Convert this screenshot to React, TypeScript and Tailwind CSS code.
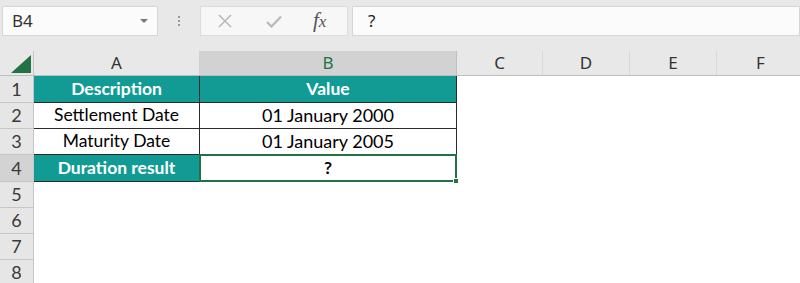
import React from "react";

const TEAL = "bg-[#129b95]";

function RowHead({ n, sel, h }: { n: number; sel?: boolean; h: string }) {
  return (
    <div
      className={`w-[34px] ${h} shrink-0 flex items-center justify-center border-b border-r border-[#c6c6c6] text-[18px] ${
        sel ? "bg-[#d3d3d3] text-[#3a3a3a]" : "bg-[#e6e6e6] text-[#3a3a3a]"
      }`}
    >
      {n}
    </div>
  );
}

export default function App() {
  const font = { fontFamily: "Lato, 'Noto Sans', sans-serif" };
  const hfont = { fontFamily: "'Noto Sans', 'Open Sans', sans-serif" };
  return (
    <div className="w-[800px] h-[283px] overflow-hidden bg-white relative" style={hfont}>
      {/* formula bar */}
      <div className="h-[51px] bg-[#e8e8e8] flex items-start pt-[6px]">
        <div className="ml-[2px] w-[156px] h-[30px] bg-[#fbfbfb] border border-[#d6d6d6] flex items-center justify-between pl-[9px] pr-[9px]">
          <span className="text-[17px] text-[#333]">B4</span>
          <svg width="8" height="5" viewBox="0 0 8 5">
            <path d="M0 0 L8 0 L4 4 Z" fill="#777" />
          </svg>
        </div>
        <div className="w-[42px] h-[30px] flex items-center justify-center">
          <div className="flex flex-col gap-[2px]">
            <div className="w-[2px] h-[2px] bg-[#9a9a9a]" />
            <div className="w-[2px] h-[2px] bg-[#9a9a9a]" />
            <div className="w-[2px] h-[2px] bg-[#9a9a9a]" />
          </div>
        </div>
        <div className="w-[148px] h-[30px] bg-[#f7f7f7] border border-[#dcdcdc] flex items-center">
          <svg className="ml-[17px]" width="14" height="14" viewBox="0 0 14 14">
            <path d="M1 1 L13 13 M13 1 L1 13" stroke="#b9b9b9" strokeWidth="1.6" />
          </svg>
          <svg className="ml-[34px]" width="16" height="13" viewBox="0 0 16 13">
            <path d="M1 7 L5.5 11.5 L15 1.5" stroke="#b9b9b9" strokeWidth="2.2" fill="none" />
          </svg>
          <span
            className="ml-[31px] text-[21px] italic text-[#555]"
            style={{ fontFamily: "'Liberation Serif', serif" }}
          >
            <i>f</i>
            <span className="text-[17px]">x</span>
          </span>
        </div>
        <div className="ml-[4px] flex-1 h-[30px] bg-[#fbfbfb] border border-[#d6d6d6] flex items-center pl-[15px]">
          <span className="text-[17px] text-[#222]">?</span>
        </div>
      </div>

      {/* column headers */}
      <div className="flex h-[25px] bg-[#e8e8e8] border-b border-[#bdbdbd]">
        <div className="w-[34px] shrink-0 flex items-end justify-end pr-[2px] pb-[2px] border-r border-[#c6c6c6]">
          <svg width="20" height="18" viewBox="0 0 20 18">
            <path d="M20 0 L20 18 L0 18 Z" fill="#217346" />
          </svg>
        </div>
        <div className="w-[166px] shrink-0 flex items-center justify-center text-[17px] text-[#333] border-r border-[#d0d0d0]">A</div>
        <div className="w-[257px] shrink-0 flex items-center justify-center text-[17px] text-[#217346] bg-[#d2d2d2] border-r border-[#c0c0c0]">B</div>
        <div className="w-[86px] shrink-0 flex items-center justify-center text-[17px] text-[#333] border-r border-[#d8d8d8]">C</div>
        <div className="w-[87px] shrink-0 flex items-center justify-center text-[17px] text-[#333] border-r border-[#d8d8d8]">D</div>
        <div className="w-[87px] shrink-0 flex items-center justify-center text-[17px] text-[#333] border-r border-[#d8d8d8]">E</div>
        <div className="w-[87px] shrink-0 flex items-center justify-center text-[17px] text-[#333]">F</div>
      </div>

      {/* rows */}
      <div style={font}>
        <div className="flex">
          <RowHead n={1} h="h-[27px]" />
          <div className={`w-[166px] h-[27px] ${TEAL} border-b border-r border-[#2a2a2a] flex items-center justify-center text-white font-bold text-[17.5px]`}>Description</div>
          <div className={`w-[257px] h-[27px] ${TEAL} border-b border-r border-[#2a2a2a] flex items-center justify-center text-white font-bold text-[17.5px]`}>Value</div>
        </div>
        <div className="flex">
          <RowHead n={2} h="h-[26px]" />
          <div className="w-[166px] h-[26px] border-b border-r border-[#2a2a2a] flex items-center justify-center text-black text-[17.5px]">Settlement Date</div>
          <div className="w-[257px] h-[26px] border-b border-r border-[#2a2a2a] flex items-center justify-center text-black text-[18px]">01 January 2000</div>
        </div>
        <div className="flex">
          <RowHead n={3} h="h-[26px]" />
          <div className="w-[166px] h-[26px] border-b border-r border-[#2a2a2a] flex items-center justify-center text-black text-[17.5px]">Maturity Date</div>
          <div className="w-[257px] h-[26px] border-b border-r border-[#2a2a2a] flex items-center justify-center text-black text-[18px]">01 January 2005</div>
        </div>
        <div className="flex">
          <RowHead n={4} sel h="h-[27px]" />
          <div className={`w-[166px] h-[27px] ${TEAL} border-b border-r border-[#2a2a2a] flex items-center justify-center text-white font-bold text-[17.5px]`}>Duration result</div>
          <div className="relative w-[258px] h-[28px] -ml-[1px] -mt-[1px] border-2 border-[#217346] flex items-center justify-center text-black font-bold text-[17.5px]">
            ?
            <div className="absolute -right-[4px] -bottom-[4px] w-[6px] h-[6px] bg-[#217346] border border-white" />
          </div>
        </div>
        {[5, 6, 7, 8].map((n) => (
          <div className="flex" key={n}>
            <RowHead n={n} h="h-[26px]" />
          </div>
        ))}
      </div>
    </div>
  );
}
